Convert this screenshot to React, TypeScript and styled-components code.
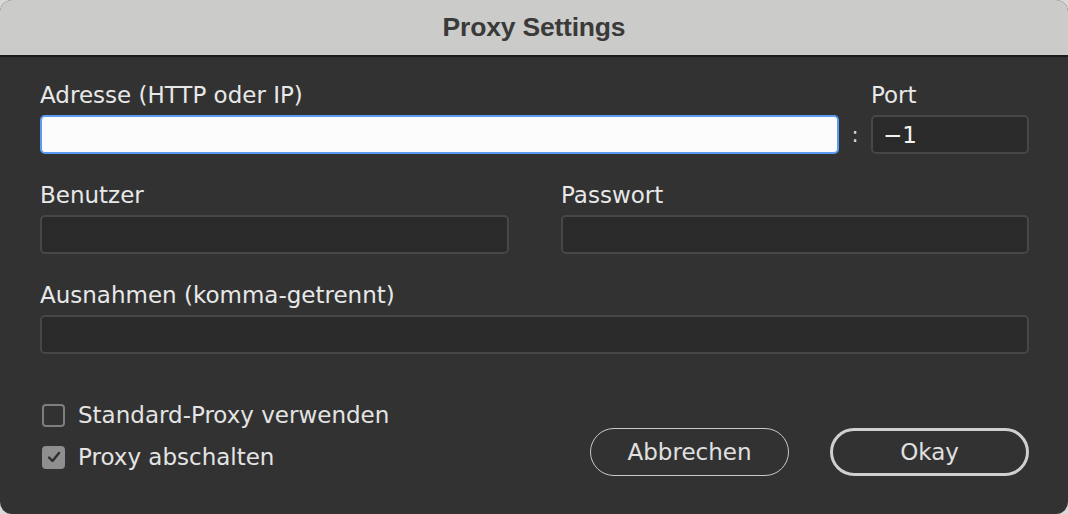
import styled, { createGlobalStyle } from "styled-components";

const GlobalStyle = createGlobalStyle`
  html, body {
    margin: 0;
    padding: 0;
    background: #d9d9d9;
  }
  * {
    box-sizing: border-box;
  }
`;

const Window = styled.div`
  width: 1068px;
  height: 514px;
  border-radius: 12px;
  overflow: hidden;
  display: flex;
  flex-direction: column;
  background: #323232;
  font-family: "DejaVu Sans", "Liberation Sans", sans-serif;
`;

const TitleBar = styled.div`
  height: 57px;
  flex: none;
  display: flex;
  align-items: center;
  justify-content: center;
  background: #cbcbc9;
  border-bottom: 2px solid #1c1c1c;
  color: #3a3a3a;
  font-family: "Liberation Sans", Arial, sans-serif;
  font-weight: 700;
  font-size: 26.5px;
  letter-spacing: -0.2px;
  padding-bottom: 1px;
`;

const Body = styled.div`
  flex: 1;
  display: flex;
  flex-direction: column;
  padding: 26px 39px 0 40px;
`;

const AddressRow = styled.div`
  display: grid;
  grid-template-columns: 1fr 32px 158px;
  align-items: end;
`;

const TwoCols = styled.div`
  display: grid;
  grid-template-columns: 469px 1fr;
  column-gap: 52px;
  margin-top: 29px;
`;

const Field = styled.div<{ $top?: number }>`
  display: flex;
  flex-direction: column;
  margin-top: ${({ $top }) => $top ?? 0}px;
`;

const Label = styled.label`
  color: #e8e8e8;
  font-size: 23px;
  line-height: 24px;
  height: 24px;
  margin-bottom: 8px;
  white-space: nowrap;
`;

const Input = styled.div<{ $focused?: boolean }>`
  height: 39px;
  border-radius: 5px;
  background: ${({ $focused }) => ($focused ? "#fcfcfc" : "#2a2a2a")};
  border: 2px solid ${({ $focused }) => ($focused ? "#5c9cf0" : "#474747")};
  color: #f2f2f2;
  font-size: 23px;
  display: flex;
  align-items: center;
  padding-left: 10px;
`;

const Colon = styled.div`
  height: 39px;
  display: flex;
  align-items: center;
  justify-content: center;
  color: #d8d8d8;
  font-size: 21px;
`;

const Bottom = styled.div`
  display: flex;
  justify-content: space-between;
  align-items: flex-start;
  margin-top: 49px;
`;

const Checks = styled.div`
  display: flex;
  flex-direction: column;
  gap: 18px;
  padding-left: 2px;
`;

const CheckRow = styled.div`
  display: flex;
  align-items: center;
  gap: 13px;
  color: #e4e4e4;
  font-size: 23px;
  line-height: 24px;
`;

const Box = styled.span<{ $checked?: boolean }>`
  width: 23px;
  height: 23px;
  flex: none;
  border-radius: 4px;
  border: 2px solid ${({ $checked }) => ($checked ? "#8f8f8f" : "#7e7e7e")};
  background: ${({ $checked }) => ($checked ? "#8f8f8f" : "transparent")};
  display: flex;
  align-items: center;
  justify-content: center;
`;

const Buttons = styled.div`
  display: flex;
  gap: 41px;
  margin-top: 25px;
`;

const Button = styled.button<{ $primary?: boolean }>`
  width: 199px;
  height: 48px;
  border-radius: 24px;
  background: transparent;
  border: ${({ $primary }) => ($primary ? "3px solid #d0d0d0" : "1.5px solid #c8c8c8")};
  color: #e0e0e0;
  font-family: "DejaVu Sans", "Liberation Sans", sans-serif;
  font-size: 23px;
  padding: 0 0 1px;
`;

export default function App() {
  return (
    <>
      <GlobalStyle />
      <Window>
        <TitleBar>Proxy Settings</TitleBar>
        <Body>
          <AddressRow>
            <Field>
              <Label>Adresse (HTTP oder IP)</Label>
              <Input $focused />
            </Field>
            <Colon>:</Colon>
            <Field>
              <Label>Port</Label>
              <Input>−1</Input>
            </Field>
          </AddressRow>
          <TwoCols>
            <Field>
              <Label>Benutzer</Label>
              <Input />
            </Field>
            <Field>
              <Label>Passwort</Label>
              <Input />
            </Field>
          </TwoCols>
          <Field $top={29}>
            <Label>Ausnahmen (komma-getrennt)</Label>
            <Input />
          </Field>
          <Bottom>
            <Checks>
              <CheckRow>
                <Box />
                Standard-Proxy verwenden
              </CheckRow>
              <CheckRow>
                <Box $checked>
                  <svg width="14" height="12" viewBox="0 0 14 12">
                    <path
                      d="M2 6.5 L5.5 10 L12 2"
                      fill="none"
                      stroke="#2e2e2e"
                      strokeWidth="2.4"
                      strokeLinecap="round"
                      strokeLinejoin="round"
                    />
                  </svg>
                </Box>
                Proxy abschalten
              </CheckRow>
            </Checks>
            <Buttons>
              <Button>Abbrechen</Button>
              <Button $primary>Okay</Button>
            </Buttons>
          </Bottom>
        </Body>
      </Window>
    </>
  );
}
